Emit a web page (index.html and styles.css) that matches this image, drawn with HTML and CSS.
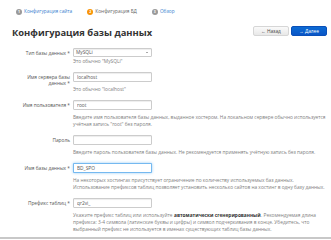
FILE: index.html
```html
<!DOCTYPE html>
<html lang="ru">
<head>
    <meta charset="UTF-8">
    <title>Конфигурация базы данных</title>
    <link rel="stylesheet" href="styles.css">
</head>
<body>
    <div class="page">
        <ul class="steps">
            <li class="step"><span class="badge">1</span>Конфигурация сайта</li>
            <li class="step active"><span class="badge">2</span>Конфигурация БД</li>
            <li class="step"><span class="badge">3</span>Обзор</li>
        </ul>

        <div class="page-header">
            <h1>Конфигурация базы данных</h1>
            <div class="actions">
                <button class="btn">&#8592; Назад</button>
                <button class="btn btn-primary">&#8594; Далее</button>
            </div>
        </div>

        <form class="form">
            <div class="row">
                <label>Тип базы данных *</label>
                <div class="controls">
                    <div class="select">MySQLi<span class="caret"></span></div>
                    <p class="help tight">Это обычно "MySQLi"</p>
                </div>
            </div>
            <div class="row">
                <label>Имя сервера базы данных *</label>
                <div class="controls">
                    <input type="text" value="localhost">
                    <p class="help">Это обычно "localhost"</p>
                </div>
            </div>
            <div class="row">
                <label>Имя пользователя *</label>
                <div class="controls">
                    <input type="text" value="root">
                    <p class="help">Введите имя пользователя базы данных, выданное хостером. На локальном сервере обычно используется учётная запись "root" без пароля.</p>
                </div>
            </div>
            <div class="row">
                <label>Пароль</label>
                <div class="controls">
                    <input type="password" value="">
                    <p class="help">Введите пароль пользователя базы данных. Не рекомендуется применять учётную запись без пароля.</p>
                </div>
            </div>
            <div class="row">
                <label>Имя базы данных *</label>
                <div class="controls">
                    <input type="text" class="focused" value="BD_SPO">
                    <p class="help">На некоторых хостингах присутствует ограничение по количеству используемых баз данных. Использование префиксов таблиц позволяет установить несколько сайтов на хостинг в одну базу данных.</p>
                </div>
            </div>
            <div class="row last">
                <label>Префикс таблиц *</label>
                <div class="controls">
                    <input type="text" value="qr2vi_">
                    <p class="help">Укажите префикс таблиц или используйте <b>автоматически сгенерированный</b>. Рекомендуемая длина префикса: 3-4 символа (латинские буквы и цифры) и символ подчеркивания в конце. Убедитесь, что выбранный префикс не используется в именах существующих таблиц базы данных.</p>
                </div>
            </div>
        </form>
        <hr>
    </div>
</body>
</html>
```

FILE: styles.css
```css
body {
    margin: 0;
    font-family: "Open Sans", sans-serif;
    color: #333;
    background-color: #fff;
}
.page {
    padding: 0 4px 0 12px;
}
.steps {
    display: flex;
    gap: 15px;
    list-style: none;
    margin: 0;
    padding: 8px 0 0 4px;
    font-size: 4.8px;
    line-height: 7px;
}
.step {
    display: flex;
    align-items: center;
    gap: 2px;
    color: #3b7fd0;
}
.step.active {
    color: #666;
}
.badge {
    width: 6px;
    height: 6px;
    border-radius: 50%;
    background-color: #999;
    color: #fff;
    font-size: 3.5px;
    font-weight: bold;
    display: flex;
    align-items: center;
    justify-content: center;
}
.step.active .badge {
    background-color: #f89406;
}
.page-header {
    display: flex;
    justify-content: space-between;
    align-items: flex-start;
    margin-top: 10px;
}
h1 {
    margin: 2px 0 0;
    font-size: 9.4px;
    line-height: 11px;
    font-weight: bold;
    color: #333;
}
.actions {
    display: flex;
    gap: 2px;
    margin-top: 1px;
}
.btn {
    height: 10px;
    padding: 0 7px;
    font-family: inherit;
    font-size: 4.8px;
    line-height: 8px;
    color: #444;
    border: 1px solid #d6d6d6;
    border-radius: 2px;
    background: linear-gradient(#fafafa, #e8e8e8);
}
.btn-primary {
    color: #fff;
    border-color: #0a4fb8;
    background: linear-gradient(#0c6bd4, #0a55c6);
}
.form {
    margin-top: 10px;
}
.row {
    display: grid;
    grid-template-columns: 58px 1fr;
    column-gap: 3px;
    margin-bottom: 7px;
}
.row.last {
    margin-bottom: 4px;
}
label {
    text-align: right;
    font-size: 4.8px;
    line-height: 6.5px;
    padding: 1.5px 0 0 10px;
    color: #555;
}
input,
.select {
    display: block;
    box-sizing: border-box;
    width: 79px;
    height: 10px;
    margin: 0;
    padding: 0 3px;
    font-family: inherit;
    font-size: 4.8px;
    color: #555;
    border: 1px solid #ccc;
    border-radius: 1px;
    background-color: #fff;
    box-shadow: inset 0 1px 1px rgba(0,0,0,0.075);
}
.select {
    height: 9px;
    line-height: 7px;
    position: relative;
    padding-left: 2px;
}
.caret {
    position: absolute;
    right: 3px;
    top: 3px;
    border-left: 1.5px solid transparent;
    border-right: 1.5px solid transparent;
    border-top: 1.5px solid #555;
}
input.focused {
    border-color: rgba(82,168,236,0.8);
    box-shadow: 0 0 3px rgba(82,168,236,0.6);
}
.help {
    margin: 4px 0 0;
    font-size: 4.8px;
    line-height: 7px;
    color: #808080;
}
.help.tight {
    margin-top: 1px;
}
.help b {
    color: #333;
    margin: 0 0.4px;
}
hr {
    margin: 0 -4px 0 -12px;
    border: 0;
    border-top: 2px solid #c8c8c8;
}
```
